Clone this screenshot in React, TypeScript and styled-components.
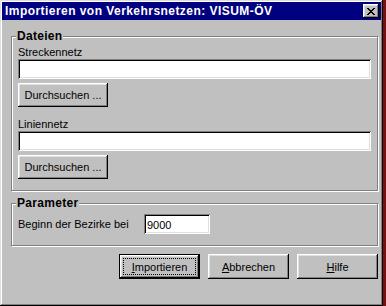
import styled, { createGlobalStyle } from "styled-components";

const GlobalStyle = createGlobalStyle`
  html, body {
    margin: 0;
    padding: 0;
    background: #741212;
  }
  body {
    font-family: "Liberation Sans", Arial, sans-serif;
    font-size: 11px;
    color: #000;
  }
`;

const Window = styled.div`
  width: 383px;
  height: 306px;
  box-sizing: border-box;
  padding: 2px;
  background: #c0c0c0;
  box-shadow: inset -1px -1px #000, inset 1px 1px #dfdfdf,
    inset -2px -2px #808080, inset 2px 2px #fff;
  display: flex;
  flex-direction: column;
`;

const TitleBar = styled.div`
  height: 18px;
  background: #000080;
  color: #fff;
  display: flex;
  align-items: center;
  justify-content: space-between;
  padding: 0 2px 0 3px;
`;

const TitleText = styled.span`
  font-weight: bold;
  font-size: 12px;
  letter-spacing: 0.45px;
`;

const CloseButton = styled.button`
  width: 16px;
  height: 14px;
  padding: 0;
  border: none;
  background: #c0c0c0;
  box-shadow: inset -1px -1px #000, inset 1px 1px #fff,
    inset -2px -2px #808080, inset 2px 2px #dfdfdf;
  display: flex;
  align-items: center;
  justify-content: center;
`;

const Body = styled.div`
  padding: 10px 3px 0 9px;
  display: flex;
  flex-direction: column;
`;

const Group = styled.fieldset<{ $gap?: number }>`
  margin: 0 0 ${(p) => p.$gap ?? 0}px 0;
  padding: 3px 6px 11px 6px;
  border: 1px solid #808080;
  box-shadow: 1px 1px 0 #fff, inset 1px 1px 0 #fff;
  display: flex;
  flex-direction: column;
  min-width: 0;
`;

const Legend = styled.legend`
  font-weight: bold;
  font-size: 12px;
  line-height: 13px;
  letter-spacing: 0.3px;
  padding: 0 1px;
  margin-left: -2px;
  background: #c0c0c0;
`;

const FieldLabel = styled.label`
  display: block;
  line-height: 13px;
`;

const TextField = styled.input<{ $width?: number }>`
  box-sizing: border-box;
  height: 20px;
  width: ${(p) => (p.$width ? `${p.$width}px` : "100%")};
  border: none;
  outline: none;
  padding: 2px 3px 0;
  background: #fff;
  font-family: "Liberation Sans", Arial, sans-serif;
  font-size: 11px;
  color: #000;
  box-shadow: inset 1px 1px #808080, inset -1px -1px #fff,
    inset 2px 2px #000, inset -2px -2px #dfdfdf;
`;

const Button = styled.button<{ $width: number; $height?: number; $default?: boolean }>`
  box-sizing: border-box;
  width: ${(p) => p.$width}px;
  height: ${(p) => p.$height ?? 24}px;
  padding: 0;
  background: #c0c0c0;
  font-family: "Liberation Sans", Arial, sans-serif;
  font-size: 11px;
  color: #000;
  border: ${(p) => (p.$default ? "1px solid #000" : "none")};
  box-shadow: inset -1px -1px #000, inset 1px 1px #fff,
    inset -2px -2px #808080, inset 2px 2px #dfdfdf;
  display: flex;
  align-items: center;
  justify-content: center;
  align-self: flex-start;
`;

const FocusRing = styled.span`
  display: flex;
  align-items: center;
  justify-content: center;
  width: calc(100% - 8px);
  height: calc(100% - 8px);
  outline: 1px dotted #000;
`;

const ParamRow = styled.div`
  display: flex;
  align-items: center;
  padding-top: 1px;
`;

const ParamLabel = styled.span`
  width: 126px;
`;

const ButtonRow = styled.div`
  display: flex;
  justify-content: flex-end;
  gap: 8px;
  margin-top: 8px;
`;

export default function App() {
  return (
    <>
      <GlobalStyle />
      <Window>
        <TitleBar>
          <TitleText>Importieren von Verkehrsnetzen: VISUM-ÖV</TitleText>
          <CloseButton aria-label="Schließen">
            <svg width="8" height="7" viewBox="0 0 8 7" shapeRendering="crispEdges">
              <path d="M0 0h2v1h1v1h2V1h1V0h2v1H7v1H6v1H5v1h1v1h1v1h1v1H6V6H5V5H3v1H2v1H0V6h1V5h1V4h1V3H2V2H1V1H0z" fill="#000" />
            </svg>
          </CloseButton>
        </TitleBar>
        <Body>
          <Group $gap={6}>
            <Legend>Dateien</Legend>
            <FieldLabel>Streckennetz</FieldLabel>
            <TextField />
            <Button $width={90} style={{ marginTop: 4 }}>Durchsuchen ...</Button>
            <FieldLabel style={{ marginTop: 11 }}>Liniennetz</FieldLabel>
            <TextField />
            <Button $width={90} style={{ marginTop: 4 }}>Durchsuchen ...</Button>
          </Group>
          <Group>
            <Legend>Parameter</Legend>
            <ParamRow>
              <ParamLabel>Beginn der Bezirke bei</ParamLabel>
              <TextField $width={66} defaultValue="9000" />
            </ParamRow>
          </Group>
          <ButtonRow>
            <Button $width={81} $height={25} $default>
              <FocusRing>
                <u>I</u>mportieren
              </FocusRing>
            </Button>
            <Button $width={81} $height={25}>
              <u>A</u>bbrechen
            </Button>
            <Button $width={81} $height={25}>
              <u>H</u>ilfe
            </Button>
          </ButtonRow>
        </Body>
      </Window>
    </>
  );
}
